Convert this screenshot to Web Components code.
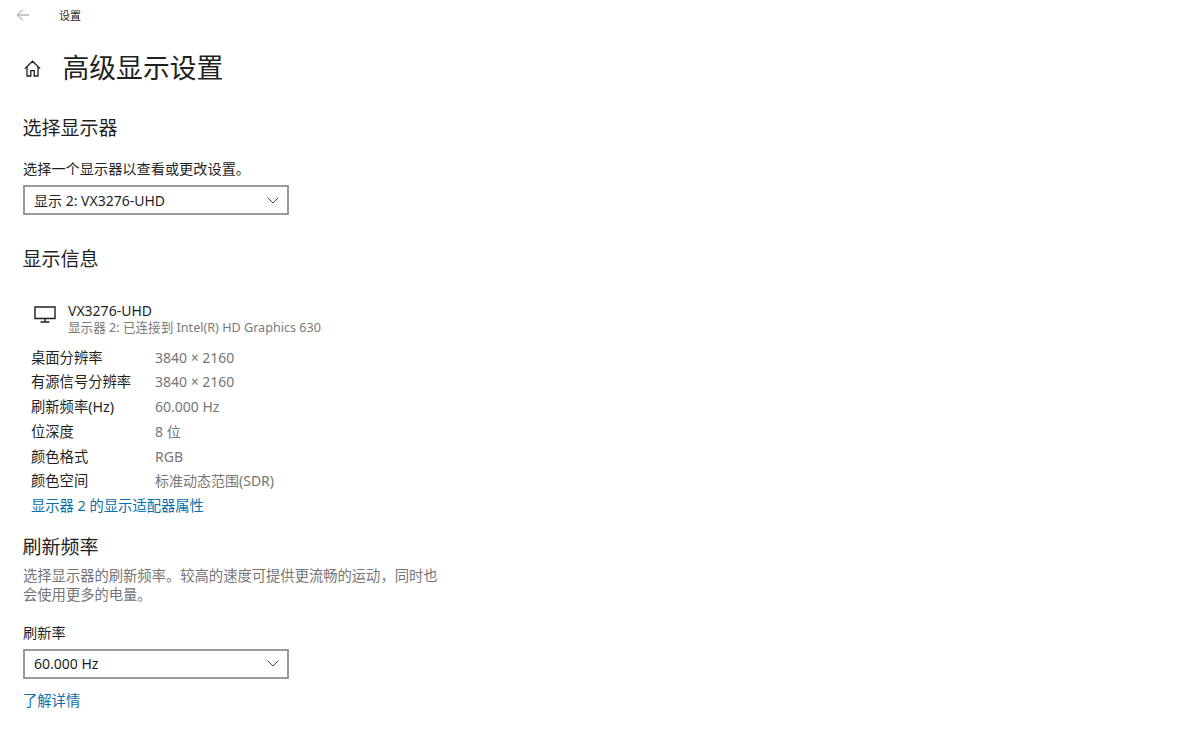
<!DOCTYPE html>
<html lang="zh-CN">
<head>
<meta charset="utf-8">
<title>设置</title>
<style>
  html, body { margin: 0; height: 100%; background: #fff; overflow: hidden; }
  body {
    font-family: "Noto Sans", "Noto Sans CJK SC", sans-serif;
    color: #1f1f1f;
  }
  settings-page { display: block; }
</style>
</head>
<body>
<settings-page>
  <title-bar>设置</title-bar>
  <page-header>高级显示设置</page-header>

  <section-heading style="--top: 26px">选择显示器</section-heading>
  <field-label style="--top: 17px">选择一个显示器以查看或更改设置。</field-label>
  <combo-box style="--top: 6px">显示 2: VX3276-UHD</combo-box>

  <section-heading style="--top: 30px">显示信息</section-heading>
  <display-card name="VX3276-UHD" sub="显示器 2: 已连接到 Intel(R) HD Graphics 630"></display-card>
  <info-row label="桌面分辨率" value="3840 × 2160"></info-row>
  <info-row label="有源信号分辨率" value="3840 × 2160"></info-row>
  <info-row label="刷新频率(Hz)" value="60.000 Hz"></info-row>
  <info-row label="位深度" value="8 位"></info-row>
  <info-row label="颜色格式" value="RGB"></info-row>
  <info-row label="颜色空间" value="标准动态范围(SDR)"></info-row>
  <link-text style="--left: 31px">显示器 2 的显示适配器属性</link-text>

  <section-heading style="--top: 14.5px">刷新频率</section-heading>
  <help-text>选择显示器的刷新频率。较高的速度可提供更流畅的运动，同时也会使用更多的电量。</help-text>
  <field-label style="--top: 19px">刷新率</field-label>
  <combo-box style="--top: 6px">60.000 Hz</combo-box>
  <link-text style="--top: 10px">了解详情</link-text>
</settings-page>

<script>
function define(name, html, init) {
    customElements.define(name, class extends HTMLElement {
        constructor() {
            super();
            this.attachShadow({ mode: 'open' });
            this.shadowRoot.innerHTML = html;
            if (init) init(this);
        }
    });
}

define('title-bar', `
  <style>
    :host { display: flex; align-items: center; height: 30px; padding-left: 16px; font-size: 11px; }
    svg { width: 14px; height: 14px; margin-right: 29px; }
  </style>
  <svg viewBox="0 0 14 14" fill="none" stroke="#8f8f8f" stroke-width="1"><path d="M13 7H1.5M6.8 1.7 1.5 7l5.3 5.3"/></svg>
  <slot></slot>
`);

define('page-header', `
  <style>
    :host { display: flex; align-items: center; height: 40px; margin-top: 18px; padding-left: 24px; font-size: 26.8px; line-height: 40px; }
    svg { width: 17px; height: 17px; margin-right: 21.5px; }
  </style>
  <svg viewBox="0 0 17 17" fill="none" stroke="#1f1f1f" stroke-width="1.3"><path d="M.8 8.6 8.5 1.2l7.7 7.4M3 6.8v9.2h3.8v-5.4h3.4V16H14V6.8"/></svg>
  <slot></slot>
`);

define('section-heading', `
  <style>
    :host { display: block; margin-top: var(--top, 0); padding-left: 22.5px; font-size: 19px; line-height: 28px; }
  </style>
  <slot></slot>
`);

define('field-label', `
  <style>
    :host { display: block; margin-top: var(--top, 0); padding-left: 23px; font-size: 14.2px; line-height: 20px; }
  </style>
  <slot></slot>
`);

define('combo-box', `
  <style>
    :host {
      display: flex; align-items: center; justify-content: space-between; box-sizing: border-box;
      width: 266px; height: 30px; margin: var(--top, 0) 0 0 23px; padding: 0 8px 0 9px;
      border: 2px solid #999; font-size: 14px;
    }
    svg { width: 12px; height: 7px; }
  </style>
  <slot></slot>
  <svg viewBox="0 0 12 7" fill="none" stroke="#444" stroke-width="1"><path d="M.7.7 6 6l5.3-5.3"/></svg>
`);

define('display-card', `
  <style>
    :host { display: flex; margin-top: 27px; padding-left: 34px; height: 37px; margin-bottom: 8.5px; }
    svg { width: 22px; height: 17px; margin: 6px 12px 0 0; }
    .name { font-size: 14px; line-height: 17px; margin-top: 2px; }
    .sub { font-size: 12.6px; line-height: 17px; color: #7a7a7a; }
  </style>
  <svg viewBox="0 0 22 17" fill="none" stroke="#1f1f1f" stroke-width="1.4"><path d="M1 1h20v11.5H1zM11 12.5V16M6.5 16h9"/></svg>
  <div>
    <div class="name"></div>
    <div class="sub"></div>
  </div>
`, (el) => {
    el.shadowRoot.querySelector('.name').textContent = el.getAttribute('name');
    el.shadowRoot.querySelector('.sub').textContent = el.getAttribute('sub');
});

define('info-row', `
  <style>
    :host { display: grid; grid-template-columns: 124px auto; justify-content: start; padding-left: 31px; height: 24.8px; font-size: 14.3px; line-height: 24.8px; }
    .value { color: #767676; font-size: 14px; }
  </style>
  <div class="label"></div>
  <div class="value"></div>
`, (el) => {
    el.shadowRoot.querySelector('.label').textContent = el.getAttribute('label');
    el.shadowRoot.querySelector('.value').textContent = el.getAttribute('value');
});

define('link-text', `
  <style>
    :host { display: block; margin-top: var(--top, 0); padding-left: var(--left, 23px); font-size: 14.3px; line-height: 24px; color: #0a6fa8; }
  </style>
  <slot></slot>
`);

define('help-text', `
  <style>
    :host { display: block; width: 416px; margin-top: 5px; padding-left: 23px; font-size: 14.3px; line-height: 19px; color: #767676; }
  </style>
  <slot></slot>
`);

define('settings-page', `<slot></slot>`);
</script>
</body>
</html>
